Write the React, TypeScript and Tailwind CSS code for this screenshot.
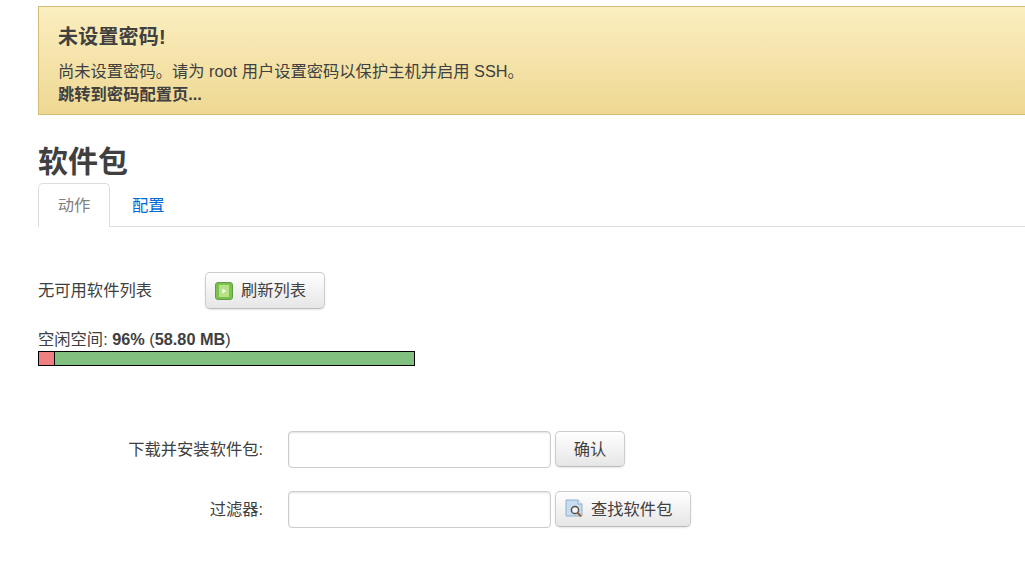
export default function App() {
  const btn =
    "flex items-center self-start rounded-[5px] border border-[#ccc] border-b-[#bbb] bg-gradient-to-b from-white to-[#e6e6e6] text-[16.3px] text-[#404040] shadow-[0_1px_2px_rgba(0,0,0,0.1)]";
  const input =
    "block h-[37px] w-[263px] rounded-[4px] border border-[#ccc] bg-white shadow-[inset_0_1px_2px_rgba(0,0,0,0.12)]";
  return (
    <div
      className="h-[572px] w-[1025px] overflow-hidden bg-white pl-[38px] pt-[6px] text-[16.3px] text-[#404040]"
      style={{ fontFamily: '"Liberation Sans", "Noto Sans CJK SC", sans-serif' }}
    >
      <div className="h-[109px] w-[1010px] border border-[#d1bd73] bg-gradient-to-b from-[#fbeec0] to-[#eed892] pl-[19px] pt-[17px]">
        <h4 className="text-[20px] font-bold leading-[26px] tracking-[0.2px] text-[#404040]">未设置密码!</h4>
        <p className="mt-[10px] leading-[23px]">尚未设置密码。请为 root 用户设置密码以保护主机并启用 SSH。</p>
        <a className="block font-bold leading-[23px]">跳转到密码配置页...</a>
      </div>
      <h2 className="mt-[27px] text-[30px] font-bold leading-[40px] text-[#404040]">软件包</h2>
      <div className="mt-[1px] flex h-[44px] w-[987px] border-b border-[#ddd]">
        <div className="h-[44px] w-[72px] rounded-t-[5px] border border-b-0 border-[#ddd] bg-white pt-[11px] text-center leading-[20px] text-[#808080]">动作</div>
        <div className="pl-[22px] pt-[12px] leading-[20px] text-[#0069d6]">配置</div>
      </div>
      <div className="mt-[45px] flex items-center">
        <span className="w-[167px] pb-[2px] leading-[20px]">无可用软件列表</span>
        <button className={`${btn} h-[37px] w-[120px] pl-[9px]`}>
          <svg width="18" height="18" viewBox="0 0 18 18" className="shrink-0">
            <rect x="0.5" y="0.5" width="17" height="17" rx="2.5" fill="#7cc04f" stroke="#5f9e45" />
            <rect x="4" y="3" width="10" height="12" fill="#b4e284" />
            <path d="M7.5 6.5 L11 9 L7.5 11.5 Z" fill="#fff" />
          </svg>
          <span className="ml-[8px]">刷新列表</span>
        </button>
      </div>
      <p className="mt-[20px] leading-[20px]">
        空闲空间: <b>96%</b> (<b>58.80 MB</b>)
      </p>
      <div className="mt-[2px] flex h-[15px] w-[377px] border border-black bg-[#81c07f]">
        <div className="h-full w-[16px] border-r border-black bg-[#f08080]" />
      </div>
      <div className="mt-[65px] flex h-[37px] items-center">
        <label className="w-[225px] pb-[2px] text-right leading-[20px]">下载并安装软件包:</label>
        <div className="ml-[25px] flex items-center gap-[4px]">
          <div className={input} />
          <button className={`${btn} h-[36px] w-[70px] justify-center`}>确认</button>
        </div>
      </div>
      <div className="mt-[23px] flex h-[37px] items-center">
        <label className="w-[225px] pb-[2px] text-right leading-[20px]">过滤器:</label>
        <div className="ml-[25px] flex items-center gap-[4px]">
          <div className={input} />
          <button className={`${btn} h-[36px] w-[136px] pl-[9px]`}>
            <svg width="18" height="20" viewBox="0 0 18 20" className="shrink-0">
              <path d="M1 1 H13 L17 5 V17 H1 Z" fill="#c8dcf0" stroke="#8fb0d2" />
              <path d="M13 1 V5 H17" fill="#eef5fb" stroke="#8fb0d2" />
              <circle cx="10" cy="11" r="3.6" fill="#f2f5f8" stroke="#5a5048" strokeWidth="1.5" />
              <path d="M12.6 13.8 L16 17.4" stroke="#9a5a2a" strokeWidth="2" />
            </svg>
            <span className="ml-[8px]">查找软件包</span>
          </button>
        </div>
      </div>
    </div>
  );
}
